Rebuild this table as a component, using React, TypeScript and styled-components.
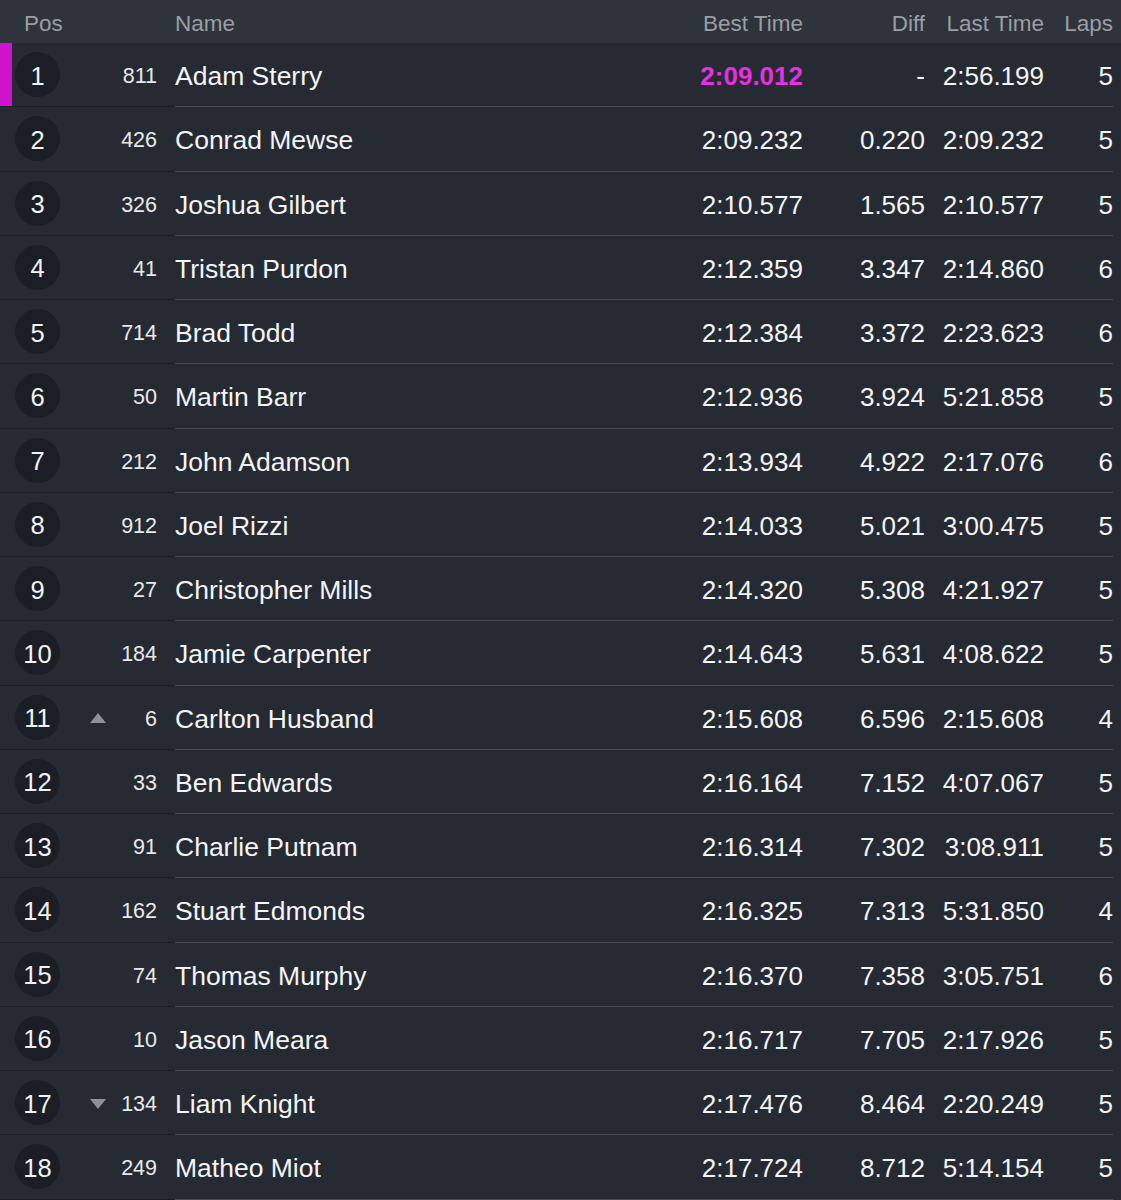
import React from "react";
import styled, { createGlobalStyle } from "styled-components";

type Trend = "up" | "down" | null;

type Entry = {
  pos: number;
  car: number;
  name: string;
  best: string;
  diff: string;
  last: string;
  laps: number;
  trend: Trend;
};

const entries: Entry[] = [
  { pos: 1, car: 811, name: "Adam Sterry", best: "2:09.012", diff: "-", last: "2:56.199", laps: 5, trend: null },
  { pos: 2, car: 426, name: "Conrad Mewse", best: "2:09.232", diff: "0.220", last: "2:09.232", laps: 5, trend: null },
  { pos: 3, car: 326, name: "Joshua Gilbert", best: "2:10.577", diff: "1.565", last: "2:10.577", laps: 5, trend: null },
  { pos: 4, car: 41, name: "Tristan Purdon", best: "2:12.359", diff: "3.347", last: "2:14.860", laps: 6, trend: null },
  { pos: 5, car: 714, name: "Brad Todd", best: "2:12.384", diff: "3.372", last: "2:23.623", laps: 6, trend: null },
  { pos: 6, car: 50, name: "Martin Barr", best: "2:12.936", diff: "3.924", last: "5:21.858", laps: 5, trend: null },
  { pos: 7, car: 212, name: "John Adamson", best: "2:13.934", diff: "4.922", last: "2:17.076", laps: 6, trend: null },
  { pos: 8, car: 912, name: "Joel Rizzi", best: "2:14.033", diff: "5.021", last: "3:00.475", laps: 5, trend: null },
  { pos: 9, car: 27, name: "Christopher Mills", best: "2:14.320", diff: "5.308", last: "4:21.927", laps: 5, trend: null },
  { pos: 10, car: 184, name: "Jamie Carpenter", best: "2:14.643", diff: "5.631", last: "4:08.622", laps: 5, trend: null },
  { pos: 11, car: 6, name: "Carlton Husband", best: "2:15.608", diff: "6.596", last: "2:15.608", laps: 4, trend: "up" },
  { pos: 12, car: 33, name: "Ben Edwards", best: "2:16.164", diff: "7.152", last: "4:07.067", laps: 5, trend: null },
  { pos: 13, car: 91, name: "Charlie Putnam", best: "2:16.314", diff: "7.302", last: "3:08.911", laps: 5, trend: null },
  { pos: 14, car: 162, name: "Stuart Edmonds", best: "2:16.325", diff: "7.313", last: "5:31.850", laps: 4, trend: null },
  { pos: 15, car: 74, name: "Thomas Murphy", best: "2:16.370", diff: "7.358", last: "3:05.751", laps: 6, trend: null },
  { pos: 16, car: 10, name: "Jason Meara", best: "2:16.717", diff: "7.705", last: "2:17.926", laps: 5, trend: null },
  { pos: 17, car: 134, name: "Liam Knight", best: "2:17.476", diff: "8.464", last: "2:20.249", laps: 5, trend: "down" },
  { pos: 18, car: 249, name: "Matheo Miot", best: "2:17.724", diff: "8.712", last: "5:14.154", laps: 5, trend: null },
];

const COLUMNS = "75px 45px 37px 18px 1fr 140px 122px 119px 69px 8px";

const GlobalStyle = createGlobalStyle`
  html, body {
    margin: 0;
    padding: 0;
    background: #262a33;
  }
  body {
    font-family: "Liberation Sans", Arial, sans-serif;
    -webkit-font-smoothing: antialiased;
  }
`;

export default function App() {
  return (
    <>
      <GlobalStyle />
      <Board>
        <HeaderRow>
          <HeadCell $indent={24}>Pos</HeadCell>
          <HeadCell />
          <HeadCell />
          <HeadCell />
          <HeadCell $indent={-2}>Name</HeadCell>
          <HeadCell $align="right">Best Time</HeadCell>
          <HeadCell $align="right">Diff</HeadCell>
          <HeadCell $align="right">Last Time</HeadCell>
          <HeadCell $align="right">Laps</HeadCell>
          <HeadCell />
        </HeaderRow>
        {entries.map((e) => (
          <Row key={e.pos}>
            <PosCell $leader={e.pos === 1}>
              <PosBadge>{e.pos}</PosBadge>
            </PosCell>
            <TrendCell>
              {e.trend && <TrendArrow $dir={e.trend} />}
            </TrendCell>
            <CarCell>{e.car}</CarCell>
            <GapCell />
            <NameCell>{e.name}</NameCell>
            <TimeCell $fastest={e.pos === 1}>{e.best}</TimeCell>
            <TimeCell>{e.diff}</TimeCell>
            <TimeCell>{e.last}</TimeCell>
            <TimeCell>{e.laps}</TimeCell>
            <EndCell />
          </Row>
        ))}
      </Board>
    </>
  );
}

const Board = styled.div`
  width: 1121px;
  min-height: 1200px;
  background: #262a33;
`;

const HeaderRow = styled.div`
  display: grid;
  grid-template-columns: ${COLUMNS};
  height: 43px;
  background: #2f333c;
  align-items: center;
`;

const HeadCell = styled.div<{ $align?: "left" | "right"; $indent?: number }>`
  font-size: 22.5px;
  color: #9a9ea6;
  text-align: ${(p) => p.$align ?? "left"};
  padding-left: ${(p) => p.$indent ?? 0}px;
  white-space: nowrap;
  line-height: 1;
  padding-top: 5px;
`;

const Row = styled.div`
  display: grid;
  grid-template-columns: ${COLUMNS};
  height: 64.25px;
  align-items: stretch;
`;

const LeftCell = styled.div`
  display: flex;
  align-items: center;
  border-bottom: 1px solid #1d2027;
`;

const PosCell = styled(LeftCell)<{ $leader?: boolean }>`
  justify-content: flex-start;
  padding-left: 15px;
  box-shadow: ${(p) => (p.$leader ? "inset 12px 0 0 #cf14cf" : "none")};
`;

const PosBadge = styled.div`
  width: 45px;
  height: 45px;
  box-sizing: border-box;
  padding-top: 3px;
  border-radius: 50%;
  background: #1b1e24;
  color: #f2f3f5;
  font-size: 25.5px;
  display: flex;
  align-items: center;
  justify-content: center;
`;

const TrendCell = styled(LeftCell)`
  justify-content: center;
  padding-top: 2px;
`;

const TrendArrow = styled.div<{ $dir: "up" | "down" }>`
  width: 0;
  height: 0;
  border-left: 8.5px solid transparent;
  border-right: 8.5px solid transparent;
  ${(p) =>
    p.$dir === "up"
      ? "border-bottom: 10px solid #8d9097;"
      : "border-top: 10px solid #8d9097;"}
`;

const CarCell = styled(LeftCell)`
  justify-content: flex-end;
  padding-top: 4px;
  font-size: 21.5px;
  color: #e8e9eb;
`;

const GapCell = styled(LeftCell)``;

const RightCell = styled.div`
  display: flex;
  align-items: center;
  padding-top: 4px;
  border-bottom: 1px solid #474b54;
  color: #f4f5f6;
  white-space: nowrap;
`;

const NameCell = styled(RightCell)`
  font-size: 26.5px;
`;

const TimeCell = styled(RightCell)<{ $fastest?: boolean }>`
  justify-content: flex-end;
  font-size: 26px;
  font-weight: ${(p) => (p.$fastest ? 700 : 400)};
  color: ${(p) => (p.$fastest ? "#e52fe0" : "#f4f5f6")};
`;

const EndCell = styled.div``;
